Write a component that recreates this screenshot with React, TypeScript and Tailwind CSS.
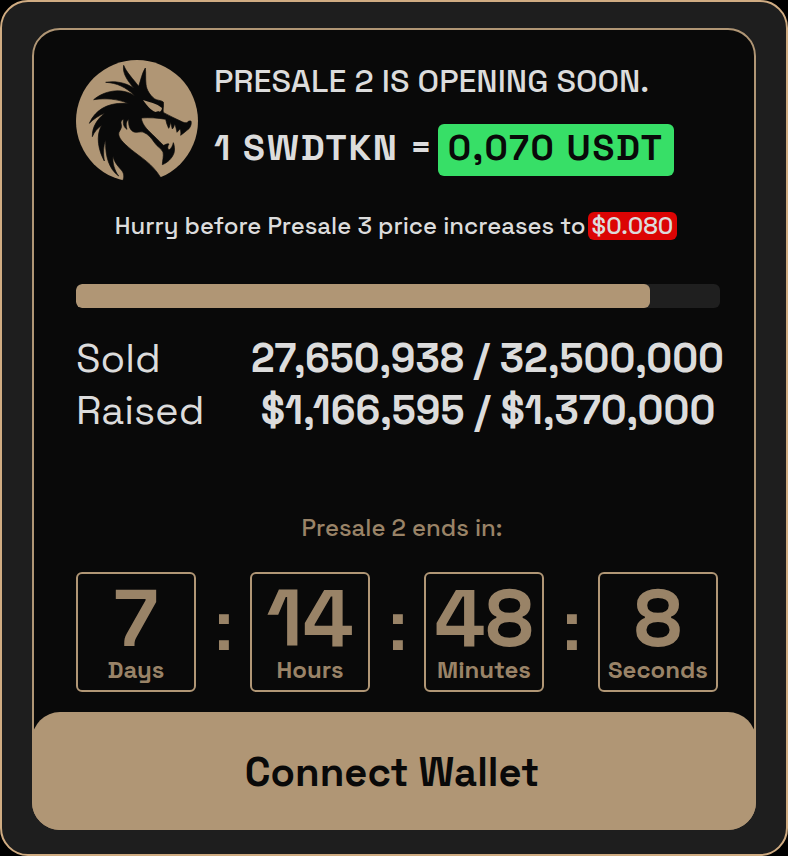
import { Fragment } from "react";

const stats = [
  { label: "Sold", value: "27,650,938 / 32,500,000" },
  { label: "Raised", value: "$1,166,595 / $1,370,000" },
];

const countdown = [
  { value: 7, label: "Days" },
  { value: 14, label: "Hours" },
  { value: 48, label: "Minutes" },
  { value: 8, label: "Seconds" },
];

const progress = 89.2;

function DragonLogo() {
  return (
    <svg viewBox="30 30 366 366" className="size-[122px] shrink-0" role="img" aria-label="Dragon logo">
      <circle cx="213" cy="213" r="183" fill="#b09675" />
      {/* head, crest and neck */}
      <path
        fill="#090909"
        stroke="#090909"
        strokeWidth="2"
        d="M283 381 C258 340 224 322 196 299 C172 279 154 262 159 247 C163 239 168 234 166 224 C163 215 166 210 173 207 C170 220 173 232 183 238 C179 226 180 214 188 208 C187 224 190 238 202 245 C211 250 221 244 231 246 C247 252 258 267 267 280 C275 291 285 295 291 306 C294 319 289 332 289 344 C305 338 319 324 324 309 C327 297 325 286 322 278 C320 287 316 295 309 300 C304 296 304 289 309 282 C302 280 297 285 292 286 C285 278 276 270 264 258 C250 244 229 228 226 204 C250 202 277 204 299 208 C301 218 304 227 308 235 C312 230 312 223 313 217 C316 223 317 230 319 237 C323 233 325 227 326 221 C330 230 331 239 333 247 C337 243 340 239 342 236 C345 243 345 249 344 256 C353 250 361 242 369 236 C375 229 377 220 375 213 L368 213 C365 219 358 220 350 216 C331 207 311 198 293 188 C289 182 294 174 292 156 C285 150 273 152 265 146 C252 135 242 121 240 103 C238 85 240 69 238 54 C229 67 224 91 218 109 C201 86 182 68 173 46 C169 69 182 89 204 115 C181 98 148 92 119 97 C153 99 179 111 206 137 C166 111 113 123 83 149 C119 144 153 146 188 161 C133 155 90 175 70 220 C83 207 99 196 116 190 C94 207 78 231 79 260 C85 246 94 235 107 226 C88 258 98 303 115 333 C111 308 112 288 119 269 C117 315 127 356 158 378 C146 362 139 340 141 319 C145 338 157 350 166 360 C174 370 175 379 171 390 L171 400 L290 400 Z"
      />
      {/* eye */}
      <path
        fill="#b09675"
        d="M231 150 C248 157 273 160 288 174 C287 181 285 184 281 185 C277 183 273 184 269 186 C253 180 242 166 231 150 Z"
      />
    </svg>
  );
}

export default function App() {
  return (
    <div className="bg-black font-['Space_Grotesk',Inter,sans-serif] text-[#dcdcdc]">
      <main className="rounded-[28px] border-2 border-[#d0ac82] bg-[#1e1e1e] px-[30px] pt-[26px] pb-6">
        <section className="rounded-[28px] border-2 border-[#b09675] bg-[#090909]">
          <div className="pt-[30px] pr-[34px] pl-[42px]">
            <header className="flex gap-4">
              <DragonLogo />
              <div className="flex flex-col gap-[22px] whitespace-nowrap">
                <h1 className="text-[32px] leading-[42px] font-medium">PRESALE 2 IS OPENING SOON.</h1>
                <p className="flex gap-1 text-[36px] leading-[48px] font-semibold tracking-wider">
                  <span>1 SWDTKN =</span>
                  <strong className="rounded-md bg-[#37df67] px-2.5 pb-1 font-semibold text-[#090909]">
                    0,070 USDT
                  </strong>
                </p>
              </div>
            </header>

            <p className="mt-[30px] flex justify-center gap-0.5 pr-1 text-2xl leading-7 font-medium whitespace-nowrap">
              <span>Hurry before Presale 3 price increases to</span>
              <strong className="rounded-md bg-[#dc0404] px-1 font-medium">$0.080</strong>
            </p>

            <div
              className="mt-11 h-6 overflow-hidden rounded-md bg-[#1f1f1f]"
              role="progressbar"
              aria-label="Presale progress"
              aria-valuenow={progress}
            >
              <div className="h-full rounded-md bg-[#b09675]" style={{ width: `${progress}%` }} />
            </div>

            <dl className="mt-[25px] text-[40px] leading-[52px] whitespace-nowrap">
              {stats.map((stat) => (
                <div key={stat.label} className="-mr-1 flex justify-between">
                  <dt className="font-normal">{stat.label}</dt>
                  <dd className="min-w-[472px] text-center font-semibold">{stat.value}</dd>
                </div>
              ))}
            </dl>

            <h2 className="mt-[75px] pl-2 text-center text-2xl leading-8 font-medium text-[#998367]">
              Presale 2 ends in:
            </h2>

            <div className="mt-7 flex items-center justify-between pr-0.5 text-[#998367]">
              {countdown.map((unit, index) => (
                <Fragment key={unit.label}>
                  {index > 0 && (
                    <span className="pb-3 pl-0.5 font-['Liberation_Sans',sans-serif] text-[70px] leading-none font-bold">
                      :
                    </span>
                  )}
                  <div className="flex h-[120px] w-[120px] flex-col items-center rounded-md border-2 border-[#b09675] pt-2">
                    <span className="text-[80px] leading-[72px] font-bold">{unit.value}</span>
                    <span className="text-2xl leading-8 font-semibold">{unit.label}</span>
                  </div>
                </Fragment>
              ))}
            </div>
          </div>

          <div className="-mx-0.5 mt-5 -mb-0.5">
            <button
              type="button"
              className="block w-full rounded-[28px] bg-[#b09675] pt-[35px] pr-1 pb-[31px] text-[40px] leading-[52px] font-bold text-[#090909]"
            >
              Connect Wallet
            </button>
          </div>
        </section>
      </main>
    </div>
  );
}
